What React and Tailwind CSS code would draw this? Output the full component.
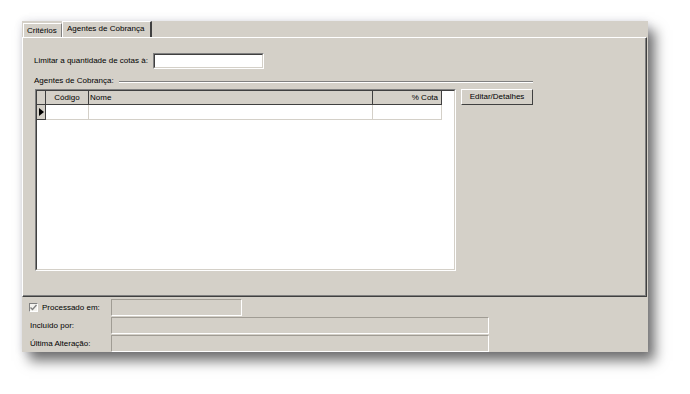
const FONT = { fontFamily: '"Liberation Sans", Arial, sans-serif' };

function Sunken({ className = "", bg = "bg-white", children }) {
  // classic 3D sunken edit border
  return (
    <div className={`border-t border-l border-t-[#808080] border-l-[#808080] border-b border-r border-b-white border-r-white ${className}`}>
      <div className={`h-full w-full border-t border-l border-t-[#404040] border-l-[#404040] border-b border-r border-b-[#d4d0c8] border-r-[#d4d0c8] ${bg}`}>
        {children}
      </div>
    </div>
  );
}

function Field({ width }) {
  return (
    <div className={`h-[17px] ${width} bg-[#d4d0c8] border-t border-l border-t-[#a09c94] border-l-[#a09c94] border-b border-r border-b-white border-r-white`} />
  );
}

export default function App() {
  return (
    <div className="w-[690px] h-[394px] bg-white pl-[22px] pt-[21px] text-[8px] whitespace-nowrap text-black" style={FONT}>
      <div className="w-[626px] h-[331px] bg-[#d4d0c8] flex flex-col shadow-[7px_9px_12px_rgba(0,0,0,0.55),0_0_8px_rgba(40,40,90,0.12)]">
        {/* tabs */}
        <div className="h-[16px] flex items-end shrink-0">
          <div className="ml-[1px] h-[14px] w-[39px] flex items-center pl-[3px] border-t border-l border-white border-r border-r-[#808080]">
            Critérios
          </div>
          <div className="h-[16px] w-[90px] flex items-center pl-[4px] pb-[2px] border-t border-l border-white border-r-2 border-r-[#404040]">
            Agentes de Cobrança
          </div>
        </div>

        {/* panel */}
        <div className="h-[260px] w-[625px] shrink-0 border-t border-l border-white border-r border-b border-r-[#404040] border-b-[#404040]">
          <div className="h-full w-full border-r border-b border-r-[#808080] border-b-[#808080] pl-[11px] pt-[15px]">
            <div className="flex items-center h-[16px]">
              <div className="w-[119px]">Limitar a quantidade de cotas à:</div>
              <Sunken className="w-[111px] h-[16px]" />
            </div>

            <div className="mt-[7px] flex items-center h-[10px] w-[499px]">
              <div className="pr-[5px]">Agentes de Cobrança:</div>
              <div className="flex-1 border-t border-t-[#808080] border-b border-b-white mt-[2px]" />
            </div>

            <div className="mt-[3px] flex items-start">
              <Sunken className="ml-[1px] w-[421px] h-[182px]">
                <div className="flex h-[14px]">
                  <div className="w-[9px] bg-[#d4d0c8] border-r border-b border-[#404040]" />
                  <div className="w-[43px] bg-[#d4d0c8] border-r border-b border-[#404040] flex items-center justify-center">Código</div>
                  <div className="w-[284px] bg-[#d4d0c8] border-r border-b border-[#404040] flex items-center pl-[1px]">Nome</div>
                  <div className="w-[69px] bg-[#d4d0c8] border-r border-b border-[#404040] flex items-center justify-end pr-[3px]">% Cota</div>
                </div>
                <div className="flex h-[15px]">
                  <div className="w-[9px] bg-[#d4d0c8] border-r border-b border-[#404040] flex items-center justify-center">
                    <svg width="5" height="8" viewBox="0 0 5 8"><path d="M0 0 L5 4 L0 8 Z" fill="#000" /></svg>
                  </div>
                  <div className="w-[43px] border-r border-b border-[#d4d0c8]" />
                  <div className="w-[284px] border-r border-b border-[#d4d0c8]" />
                  <div className="w-[69px] border-r border-b border-[#d4d0c8]" />
                </div>
              </Sunken>
              <button
                type="button"
                className="ml-[5px] w-[72px] h-[16px] bg-[#d4d0c8] border border-t-white border-l-white border-r-[#404040] border-b-[#404040] flex items-center justify-center"
              >
                Editar/Detalhes
              </button>
            </div>
          </div>
        </div>

        {/* footer */}
        <div className="pt-[2px] pl-[7px] flex flex-col gap-[1px]">
          <div className="flex items-center h-[17px]">
            <div className="w-[82px] flex items-center">
              <div className="w-[9px] h-[9px] bg-[#f4f3ef] border-t border-l border-[#808080] border-b border-r border-b-white border-r-white flex items-center justify-center">
                <svg width="7" height="7" viewBox="0 0 7 7"><path d="M0.5 3.5 L2.5 5.5 L6.5 1" stroke="#808080" strokeWidth="1.4" fill="none" /></svg>
              </div>
              <span className="ml-[4px]">Processado em:</span>
            </div>
            <Field width="w-[131px]" />
          </div>
          <div className="flex items-center h-[17px]">
            <div className="w-[82px] pl-[1px]">Incluído por:</div>
            <Field width="w-[378px]" />
          </div>
          <div className="flex items-center h-[17px]">
            <div className="w-[82px] pl-[1px]">Última Alteração:</div>
            <Field width="w-[378px]" />
          </div>
        </div>
      </div>
    </div>
  );
}
